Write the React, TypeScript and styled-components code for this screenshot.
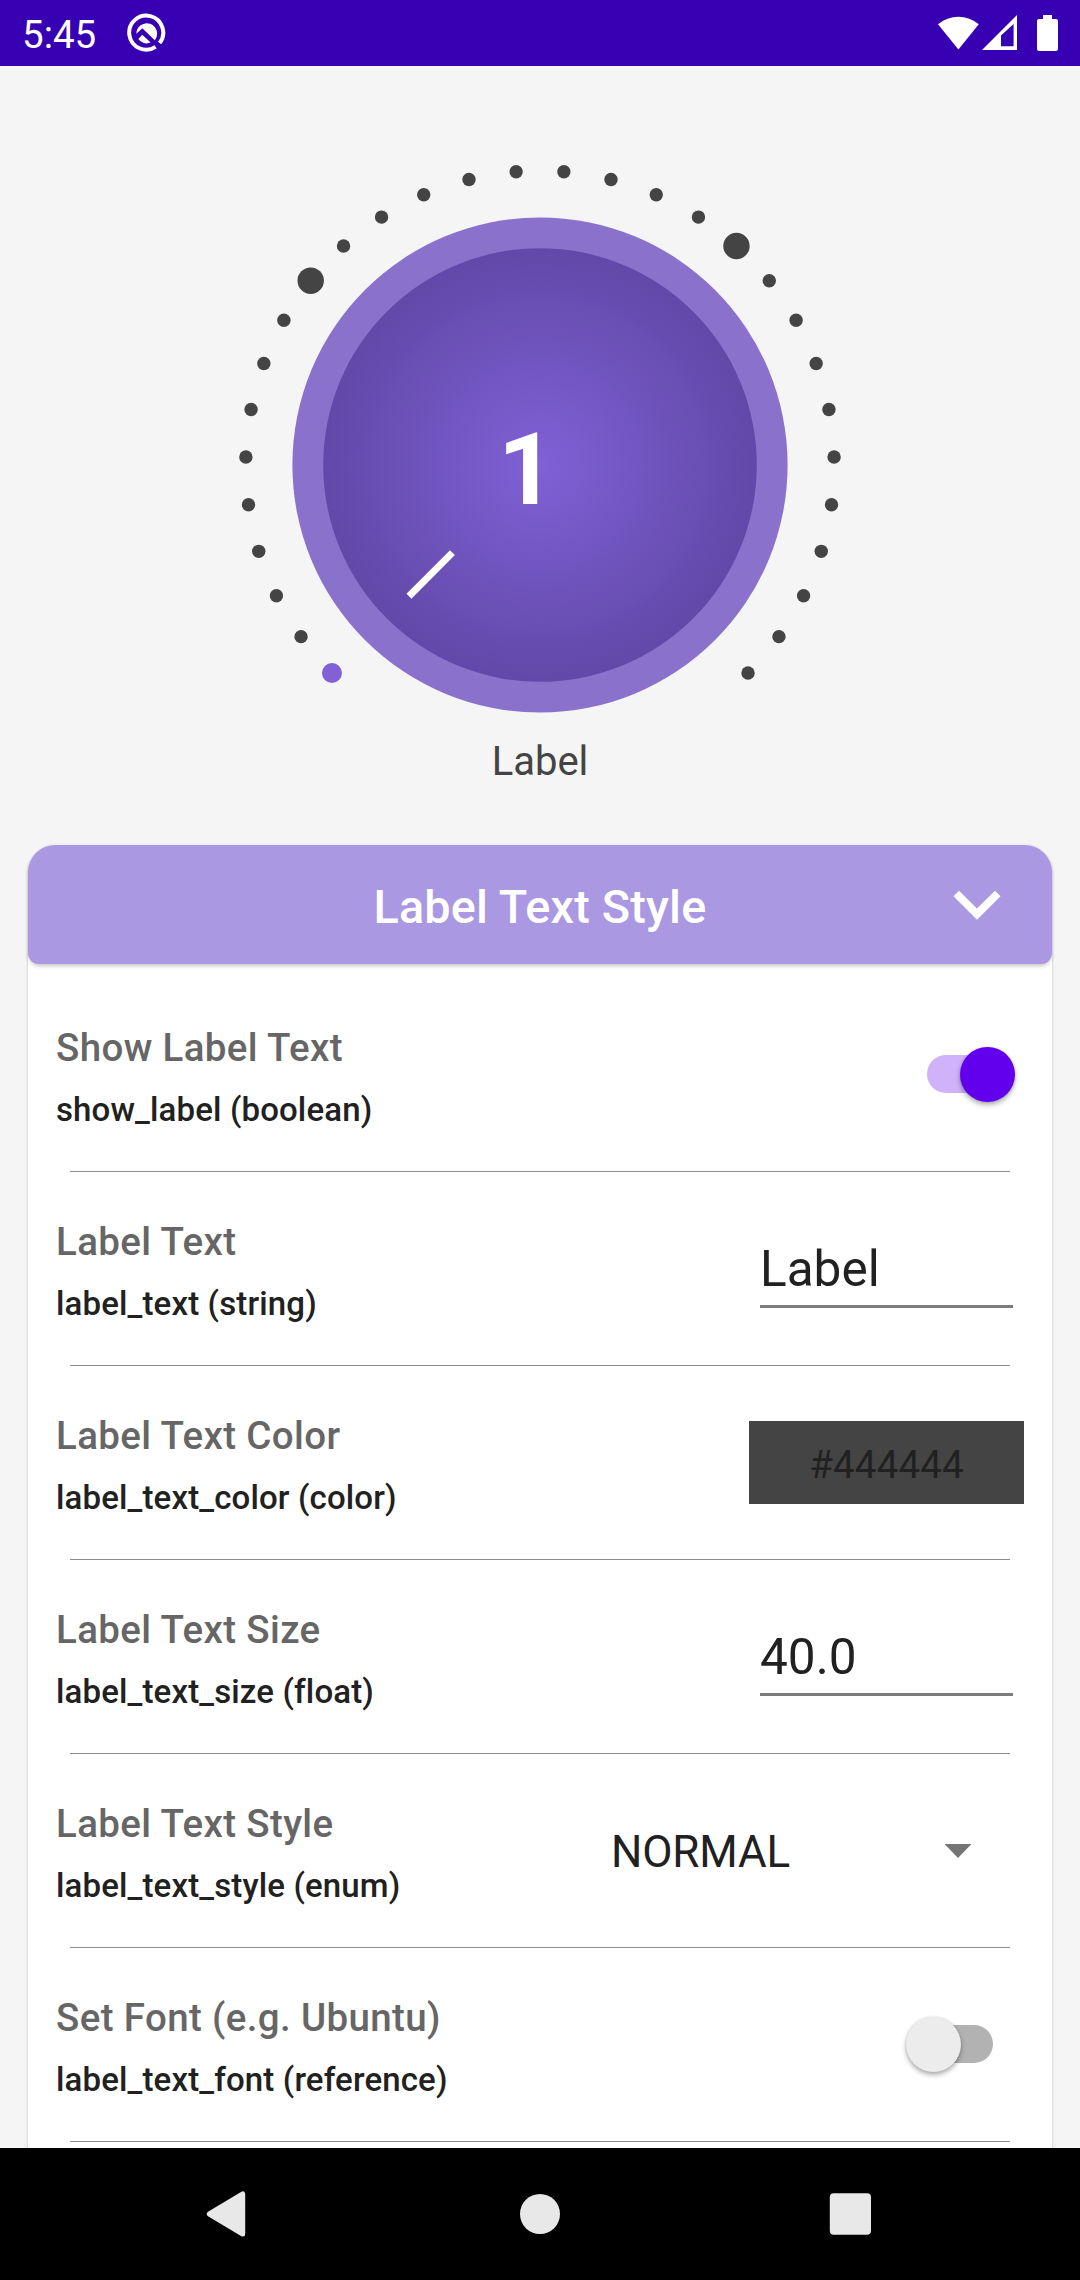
import React from "react";
import styled, { createGlobalStyle } from "styled-components";

const GlobalStyle = createGlobalStyle`
  *, *::before, *::after { box-sizing: border-box; }
  body { margin: 0; background: #f5f5f5; font-family: Roboto, "Noto Sans", sans-serif; }
`;

const Screen = styled.div`
  display: flex;
  flex-direction: column;
  width: 1080px;
  height: 2280px;
  overflow: hidden;
  background: #f5f5f5;
`;

const StatusBar = styled.header`
  display: flex;
  align-items: center;
  flex: none;
  height: 66px;
  padding: 0 22px 0 22px;
  background: #3700b3;
  color: #fff;
`;

const Clock = styled.span`
  width: 105px;
  padding-top: 3px;
  font-size: 38.5px;
  line-height: 63px;
`;

const StatusIcons = styled.div`
  display: flex;
  align-items: center;
  margin-left: auto;
`;

const Icon = styled.svg`
  display: block;
  flex: none;
`;

const Content = styled.main`
  display: flex;
  flex-direction: column;
  align-items: center;
  flex: 1;
  min-height: 0;
  overflow: hidden;
  padding: 79px 28px 0;
`;

const KnobLabel = styled.div`
  font-size: 40px;
  line-height: 49px;
  color: #444;
`;

const Card = styled.section`
  align-self: stretch;
  flex: none;
  height: 1420px;
  margin-top: 59px;
  border-radius: 27px 27px 11px 11px;
  background: #fff;
  box-shadow: 0 1px 3px rgba(0, 0, 0, 0.24);
`;

const CardHeader = styled.div`
  display: grid;
  grid-template-columns: 122px 1fr 122px;
  align-items: center;
  height: 119px;
  border-radius: 27px 27px 11px 11px;
  background: #aa98e2;
  box-shadow: 0 3px 4px -1px rgba(0, 0, 0, 0.24);
`;

const CardTitle = styled.h2`
  grid-column: 2;
  margin: 0;
  padding-top: 4px;
  font-size: 46.75px;
  font-weight: 500;
  line-height: 56px;
  letter-spacing: 0.18px;
  text-align: center;
  color: #fff;
`;

const ExpandIcon = styled(Icon)`
  margin-top: -1px;
`;

const Rows = styled.div`
  display: flex;
  flex-direction: column;
  padding-top: 14px;
`;

const Row = styled.div`
  display: flex;
  flex-direction: column;
  height: 194px;
`;

const RowBody = styled.div`
  display: flex;
  align-items: center;
  justify-content: space-between;
  flex: 1;
  padding-left: 28px;
`;

const Divider = styled.hr`
  width: 940px;
  height: 1px;
  margin: 0 0 0 42px;
  border: 0;
  background: #8c8c8c;
`;

const Names = styled.div`
  display: flex;
  flex-direction: column;
  gap: 20px;
  padding-top: 4px;
  white-space: nowrap;
`;

const RowTitle = styled.span`
  font-size: 38.5px;
  font-weight: 500;
  line-height: 45px;
  letter-spacing: 0.36px;
  color: #666;
`;

const RowAttr = styled.span`
  font-size: 33px;
  font-weight: 500;
  line-height: 39px;
  letter-spacing: 0.14px;
  color: #212121;
`;

const Switch = styled.div<{ $on: boolean }>`
  display: flex;
  align-items: center;
  justify-content: ${(p) => (p.$on ? "flex-end" : "flex-start")};
  width: 88px;
  height: 55px;
  margin: 0 ${(p) => (p.$on ? "37px" : "59px")} 1px 0;
`;

const Track = styled.div<{ $on: boolean }>`
  display: flex;
  align-items: center;
  justify-content: ${(p) => (p.$on ? "flex-end" : "flex-start")};
  width: 74px;
  height: 38px;
  margin: ${(p) => (p.$on ? "0 14px 0 0" : "0 0 0 14px")};
  border-radius: 19px;
  background: ${(p) => (p.$on ? "#cfb2f9" : "#b2b2b2")};
`;

const Thumb = styled.div<{ $on: boolean }>`
  flex: none;
  width: 55px;
  height: 55px;
  margin: ${(p) => (p.$on ? "0 -14px 0 0" : "0 0 0 -13px")};
  border-radius: 50%;
  background: ${(p) => (p.$on ? "#6200ee" : "#ececec")};
  box-shadow: 0 3px 5px rgba(0, 0, 0, 0.3), 0 0 3px rgba(0, 0, 0, 0.12);
`;

const Field = styled.div`
  width: 253px;
  height: 78px;
  margin: 1px 39px 0 0;
  border-bottom: 3px solid #7c7c7c;
  font-size: 49.5px;
  line-height: 78px;
  color: #212121;
`;

const Swatch = styled.div`
  display: flex;
  align-items: center;
  justify-content: center;
  width: 275px;
  height: 83px;
  margin-right: 28px;
  padding-top: 3px;
  background: #444;
  font-size: 38.5px;
  letter-spacing: 0.15px;
  color: #212121;
`;

const Spinner = styled.div`
  display: flex;
  align-items: center;
  justify-content: space-between;
  width: 361px;
  margin-right: 80px;
  font-size: 44px;
  line-height: 52px;
  letter-spacing: -0.15px;
  color: #212121;
`;

const SpinnerValue = styled.span`
  padding-top: 2px;
`;

const NavBar = styled.nav`
  display: flex;
  align-items: center;
  justify-content: space-between;
  flex: none;
  height: 132px;
  padding: 0 209px 0 204px;
  background: #000;
`;

const DOTS = 30;
const BIG_DOTS = [9, 19];
const RING = 294.2;

function Knob() {
  return (
    <Icon width="640" height="592" viewBox="220 145 640 592">
      <defs>
        <radialGradient id="face" gradientUnits="userSpaceOnUse" cx="540" cy="465" r="217">
          <stop offset="0" stopColor="#8061d6" />
          <stop offset="1" stopColor="#6248a8" />
        </radialGradient>
      </defs>
      {Array.from({ length: DOTS }, (_, i) => {
        const a = ((45 + (270 / (DOTS - 1)) * i) * Math.PI) / 180;
        return (
          <circle
            key={i}
            cx={540 - RING * Math.sin(a)}
            cy={465 + RING * Math.cos(a)}
            r={i === 0 ? 10 : BIG_DOTS.includes(i) ? 13.2 : 6.7}
            fill={i === 0 ? "#8161d6" : "#444"}
          />
        );
      })}
      <circle cx="540" cy="465" r="247.6" fill="#8a72cc" />
      <circle cx="540" cy="465" r="216.8" fill="url(#face)" />
      <path d="M452.4 552.6 409 596.2" stroke="#fff" strokeWidth="7" />
      <text x="498" y="504" fontSize="100" fontWeight="700" fill="#fff">1</text>
    </Icon>
  );
}

function Toggle({ on }: { on: boolean }) {
  return (
    <Switch $on={on}>
      <Track $on={on}>
        <Thumb $on={on} />
      </Track>
    </Switch>
  );
}

const ROWS: { title: string; attr: string; control: React.ReactNode }[] = [
  { title: "Show Label Text", attr: "show_label (boolean)", control: <Toggle on /> },
  { title: "Label Text", attr: "label_text (string)", control: <Field>Label</Field> },
  { title: "Label Text Color", attr: "label_text_color (color)", control: <Swatch>#444444</Swatch> },
  { title: "Label Text Size", attr: "label_text_size (float)", control: <Field>40.0</Field> },
  {
    title: "Label Text Style",
    attr: "label_text_style (enum)",
    control: (
      <Spinner>
        <SpinnerValue>NORMAL</SpinnerValue>
        <Icon width="28" height="14" viewBox="0 0 28 14">
          <path d="M0.5 0H27.5L14 14Z" fill="#757575" />
        </Icon>
      </Spinner>
    ),
  },
  { title: "Set Font (e.g. Ubuntu)", attr: "label_text_font (reference)", control: <Toggle on={false} /> },
];

export default function App() {
  return (
    <Screen>
      <GlobalStyle />
      <StatusBar>
        <Clock>5:45</Clock>
        <Icon width="40" height="40" viewBox="0 0 40 40">
          <path d="M29.2 34A17 17 0 1 1 33.2 30.3" transform="translate(-.6 -.2)" fill="none" stroke="#fff" strokeWidth="4" />
          <path d="M9.3 20.8A10.4 10.4 0 1 1 27.8 27.2L15.3 15.2Z" fill="#fff" />
          <path d="M11.3 26.1 15.3 21.8 23.6 29.6A10.4 10.4 0 0 1 11.3 26.1Z" fill="#fff" />
        </Icon>
        <StatusIcons>
          <Icon width="120" height="40" viewBox="938 13 120 40" fill="#fff">
            <path d="M938 24.2A32 32 0 0 1 978.8 24.2L958.4 49.6Z" />
            <path fillRule="evenodd" d="M982 50 1017 15V50ZM1001 46.3H1013.6V24L1001 35.5Z" />
            <path d="M1043 15H1052V19H1056Q1058 19 1058 21V49Q1058 51 1056 51H1039Q1037 51 1037 49V21Q1037 19 1039 19H1043Z" />
          </Icon>
        </StatusIcons>
      </StatusBar>
      <Content>
        <Knob />
        <KnobLabel>Label</KnobLabel>
        <Card>
          <CardHeader>
            <CardTitle>Label Text Style</CardTitle>
            <ExpandIcon width="94" height="94" viewBox="0 0 24 24">
              <path d="M7.41 8.59 12 13.17l4.59-4.58L18 10l-6 6-6-6z" fill="#fff" />
            </ExpandIcon>
          </CardHeader>
          <Rows>
            {ROWS.map((row) => (
              <Row key={row.attr}>
                <RowBody>
                  <Names>
                    <RowTitle>{row.title}</RowTitle>
                    <RowAttr>{row.attr}</RowAttr>
                  </Names>
                  {row.control}
                </RowBody>
                <Divider />
              </Row>
            ))}
          </Rows>
        </Card>
      </Content>
      <NavBar>
        <Icon width="47" height="46" viewBox="0 0 47 46">
          <path d="M5.3 23 38.7 3V43Z" fill="#e8e8e8" stroke="#e8e8e8" strokeWidth="5" strokeLinejoin="round" />
        </Icon>
        <Icon width="42" height="42" viewBox="0 0 42 42">
          <circle cx="21" cy="21" r="20" fill="#e8e8e8" />
        </Icon>
        <Icon width="42" height="42" viewBox="0 0 42 42">
          <rect x="0.8" y="0.3" width="41.2" height="41.5" rx="4" fill="#e8e8e8" />
        </Icon>
      </NavBar>
    </Screen>
  );
}
